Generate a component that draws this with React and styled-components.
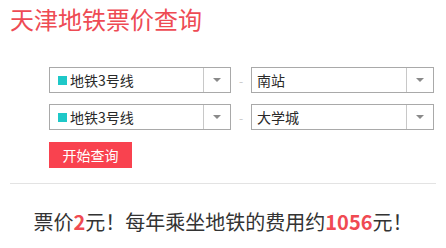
import React from "react";
import styled, { createGlobalStyle } from "styled-components";

const Global = createGlobalStyle`
  body {
    margin: 0;
    background: #fff;
    font-family: "Microsoft YaHei", "Noto Sans CJK SC", "Noto Sans", sans-serif;
  }
`;

const Page = styled.div`
  width: 446px;
  height: 248px;
  overflow: hidden;
`;

const Title = styled.h1`
  margin: 0;
  padding: 4px 0 0 10px;
  font-size: 24px;
  line-height: 30px;
  font-weight: normal;
  color: #ee4b54;
`;

const Form = styled.div`
  padding: 33px 0 0 49px;
  display: flex;
  flex-direction: column;
  gap: 11px;
`;

const Row = styled.div`
  display: flex;
  align-items: center;
`;

const Select = styled.div`
  box-sizing: border-box;
  width: ${(p) => p.$w}px;
  height: 26px;
  border: 1px solid #a9a9a9;
  display: flex;
  align-items: stretch;
  background: #fff;
`;

const Value = styled.div`
  flex: 1;
  display: flex;
  align-items: center;
  padding-left: ${(p) => p.$pl}px;
  font-size: 14px;
  color: #2a2a2a;
  gap: 3px;
`;

const Swatch = styled.span`
  display: inline-block;
  width: 9px;
  height: 9px;
  background: ${(p) => p.$c};
`;

const Arrow = styled.div`
  width: 26px;
  border-left: 1px solid #c8c8c8;
  display: flex;
  align-items: center;
  justify-content: center;
  &::after {
    content: "";
    border-left: 4px solid transparent;
    border-right: 4px solid transparent;
    border-top: 4px solid #8a8a8a;
  }
`;

const Dash = styled.div`
  width: 20px;
  text-align: center;
  color: #c8c8c8;
  font-size: 12px;
`;

const Button = styled.button`
  margin-top: 1px;
  width: 83px;
  height: 26px;
  border: none;
  background: #f9424f;
  color: #fff;
  font-family: inherit;
  font-size: 14px;
  padding: 0;
  cursor: pointer;
  align-self: flex-start;
`;

const Divider = styled.hr`
  margin: 15px 10px 0;
  border: none;
  border-top: 1px solid #e3e3e3;
`;

const Result = styled.p`
  margin: 0;
  padding-top: 24px;
  text-align: center;
  font-size: 20px;
  line-height: 28px;
  color: #333;
`;

const Num = styled.b`
  color: #f04a52;
  font-weight: bold;
`;

function Dropdown({ w, swatch, children }) {
  return (
    <Select $w={w}>
      <Value $pl={swatch ? 8 : 5}>
        {swatch && <Swatch $c={swatch} />}
        <span>{children}</span>
      </Value>
      <Arrow />
    </Select>
  );
}

export default function App() {
  return (
    <Page>
      <Global />
      <Title>天津地铁票价查询</Title>
      <Form>
        <Row>
          <Dropdown w={182} swatch="#1ec8c8">地铁3号线</Dropdown>
          <Dash>-</Dash>
          <Dropdown w={183}>南站</Dropdown>
        </Row>
        <Row>
          <Dropdown w={182} swatch="#1ec8c8">地铁3号线</Dropdown>
          <Dash>-</Dash>
          <Dropdown w={183}>大学城</Dropdown>
        </Row>
        <Button>开始查询</Button>
      </Form>
      <Divider />
      <Result>
        票价<Num>2</Num>元！每年乘坐地铁的费用约<Num>1056</Num>元！
      </Result>
    </Page>
  );
}
